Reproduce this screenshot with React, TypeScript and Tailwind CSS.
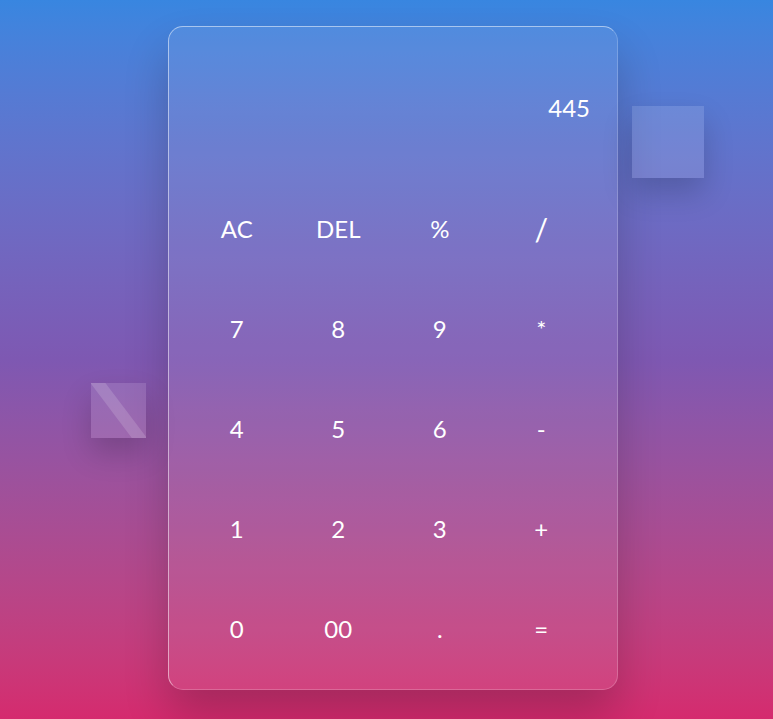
import React from 'react';

const keys = [
  'AC', 'DEL', '%', '/',
  '7', '8', '9', '*',
  '4', '5', '6', '-',
  '1', '2', '3', '+',
  '0', '00', '.', '=',
];

export default function App() {
  return (
    <div
      className="relative h-[719px] w-full overflow-hidden bg-gradient-to-b from-[#3886e0] via-[#7e58b2] to-[#d52a6e]"
      style={{ fontFamily: 'Lato, "Open Sans", sans-serif' }}
    >
      {/* decorative squares */}
      <div className="absolute left-[632px] top-[106px] h-[72px] w-[72px] bg-white/[0.12] shadow-[0_15px_30px_rgba(0,0,0,0.18)]" />
      <div className="absolute left-[91px] top-[383px] h-[55px] w-[55px] overflow-hidden bg-white/[0.12] shadow-[0_15px_30px_rgba(0,0,0,0.18)]">
        <div className="absolute left-[22px] top-[-22px] h-[100px] w-[12px] -rotate-[37deg] bg-white/15" />
      </div>

      <div className="pt-[26px]">
        <div className="ml-[168px] flex h-[664px] w-[450px] flex-col rounded-[15px] border border-t-white/50 border-l-white/50 border-r-white/20 border-b-white/20 bg-white/[0.08] pb-[10px] pl-[17px] pr-[25px] text-white shadow-[0_25px_45px_rgba(0,0,0,0.2)]">
          <div className="flex h-[153px] items-center justify-end pr-[2px] pt-[10px] text-[24px]">
            445
          </div>
          <div className="grid grid-cols-4">
            {keys.map((k) => (
              <button
                key={k}
                className={`flex h-[100px] items-center justify-center ${k === '/' ? 'text-[30px]' : 'text-[24px]'}`}
              >
                {k}
              </button>
            ))}
          </div>
        </div>
      </div>
    </div>
  );
}
